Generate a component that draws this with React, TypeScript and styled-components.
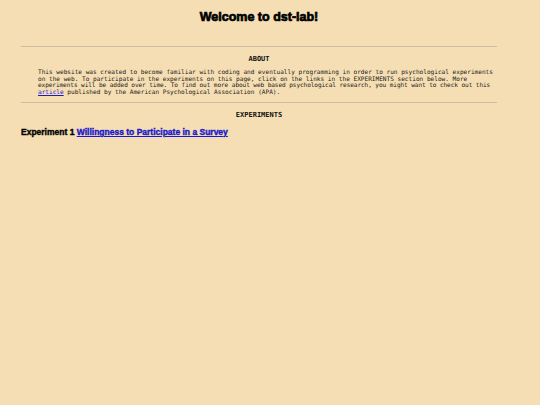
import styled, { createGlobalStyle } from 'styled-components';

const GlobalStyle = createGlobalStyle`
  html, body {
    margin: 0;
    padding: 0;
    background: #f5deb3;
  }
  body {
    font-family: "Liberation Sans", Arial, sans-serif;
    color: #000;
  }
`;

const Page = styled.div`
  width: 476px;
  margin-left: 21px;
  padding-top: 10px;
`;

const Title = styled.h1`
  margin: 0;
  height: 14px;
  line-height: 14px;
  text-align: center;
  font-size: 12.5px;
  font-weight: 700;
  -webkit-text-stroke: 0.7px #000;
`;

const Rule = styled.hr<{ $top: number }>`
  margin: ${(p) => p.$top}px 0 0 0;
  border: 0;
  border-top: 1px solid #cbbd9f;
  height: 0;
`;

const SectionTitle = styled.h2`
  margin: 7px 0 0 0;
  height: 10px;
  line-height: 10px;
  text-align: center;
  font-family: "DejaVu Sans Mono", "Liberation Mono", monospace;
  font-size: 7px;
  font-weight: 700;
  color: #111;
`;

const Text = styled.p`
  margin: 5px 0 0 17px;
  font-family: "DejaVu Sans Mono", "Liberation Mono", monospace;
  font-size: 6.1px;
  line-height: 6.5px;
  white-space: nowrap;
  color: #1a1a1a;
`;

const Line = styled.span<{ $tight?: boolean }>`
  letter-spacing: ${(p) => (p.$tight ? '-0.08px' : '0')};
`;

const Link = styled.a`
  color: #1a1acc;
  text-decoration: underline;
`;

const ExperimentRow = styled.div`
  margin-top: 7px;
  font-size: 8.5px;
  line-height: 11px;
  font-weight: 700;
  -webkit-text-stroke: 0.4px currentColor;
`;

const ExperimentLink = styled.a`
  color: #1a1acc;
  text-decoration: underline;
`;

export default function App() {
  return (
    <>
      <GlobalStyle />
      <Page>
        <Title>Welcome to dst-lab!</Title>
        <Rule $top={22} />
        <SectionTitle>ABOUT</SectionTitle>
        <Text>
          <Line>This website was created to become familiar with coding and eventually programming in order to run psychological experiments</Line>
          <br />
          <Line>on the web. To participate in the experiments on this page, click on the links in the EXPERIMENTS section below. More</Line>
          <br />
          <Line $tight>experiments will be added over time. To find out more about web based psychological research, you might want to check out this</Line>
          <br />
          <Link href="#">article</Link> published by the American Psychological Association (APA).
        </Text>
        <Rule $top={7} />
        <SectionTitle>EXPERIMENTS</SectionTitle>
        <ExperimentRow>
          Experiment 1 <ExperimentLink href="#">Willingness to Participate in a Survey</ExperimentLink>
        </ExperimentRow>
      </Page>
    </>
  );
}
